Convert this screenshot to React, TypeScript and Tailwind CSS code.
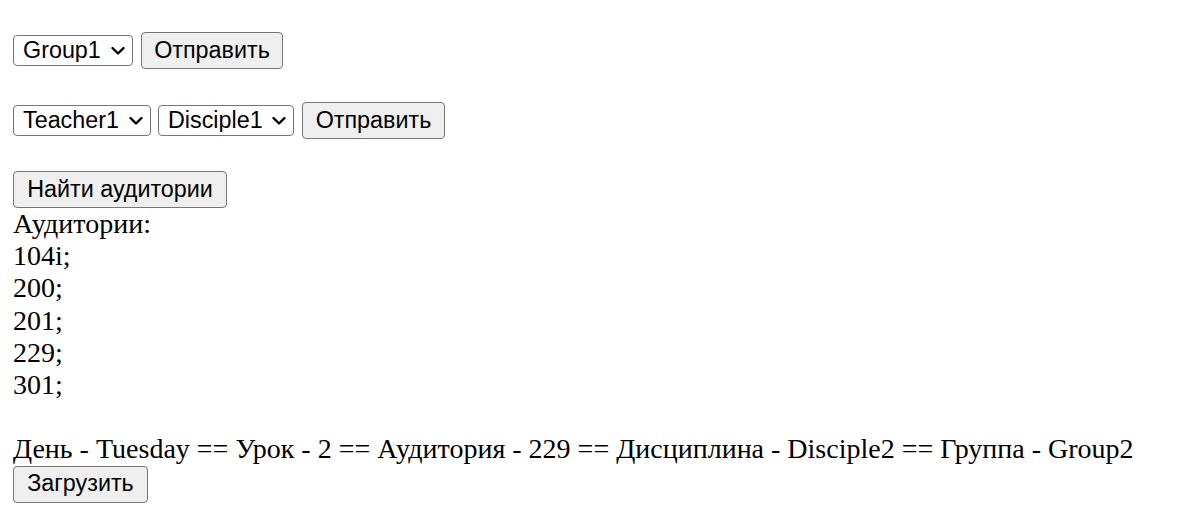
import React from 'react';

const ui = "font-['Liberation_Sans',Arial,sans-serif] text-[23.33px] text-black";

function Chevron() {
  return (
    <svg
      className="pointer-events-none absolute right-[8px] top-1/2 -translate-y-1/2"
      width="14"
      height="9"
      viewBox="0 0 14 9"
      fill="none"
    >
      <path d="M1.5 1.5 L7 7 L12.5 1.5" stroke="#000" strokeWidth="2.4" strokeLinecap="round" strokeLinejoin="round" />
    </svg>
  );
}

function Select({ value, width }: { value: string; width: string }) {
  return (
    <div className={`relative ${width} h-[31px]`}>
      <select
        defaultValue={value}
        className={`${ui} h-full w-full appearance-none rounded-[4px] border border-[#767676] bg-white pl-[9px] pr-[26px] leading-none outline-none`}
      >
        <option>{value}</option>
      </select>
      <Chevron />
    </div>
  );
}

function Button({ children, width }: { children: React.ReactNode; width: string }) {
  return (
    <button
      className={`${ui} ${width} h-[37px] rounded-[4px] border border-[#767676] bg-[#efefef] leading-none`}
    >
      {children}
    </button>
  );
}

export default function App() {
  const rooms = ['104i;', '200;', '201;', '229;', '301;'];

  return (
    <div className="min-h-[518px] bg-white pl-[13px] pt-[32px]">
      <div className="flex h-[37px] items-center gap-[8px]">
        <Select value="Group1" width="w-[120px]" />
        <Button width="w-[142px]">Отправить</Button>
      </div>

      <div className="mt-[33px] flex h-[37px] items-center">
        <Select value="Teacher1" width="w-[138px]" />
        <div className="ml-[7px]">
          <Select value="Disciple1" width="w-[136px]" />
        </div>
        <div className="ml-[8px]">
          <Button width="w-[143px]">Отправить</Button>
        </div>
      </div>

      <div className="mt-[32px]">
        <Button width="w-[214px]">Найти аудитории</Button>
      </div>

      <div className="font-['Liberation_Serif','Times_New_Roman',serif] text-[28px] leading-[32.2px] text-black">
        <div>Аудитории:</div>
        {rooms.map((r) => (
          <div key={r}>{r}</div>
        ))}
        <div>&nbsp;</div>
        <div>День - Tuesday == Урок - 2 == Аудитория - 229 == Дисциплина - Disciple2 == Группа - Group2</div>
      </div>

      <Button width="w-[135px]">Загрузить</Button>
    </div>
  );
}
